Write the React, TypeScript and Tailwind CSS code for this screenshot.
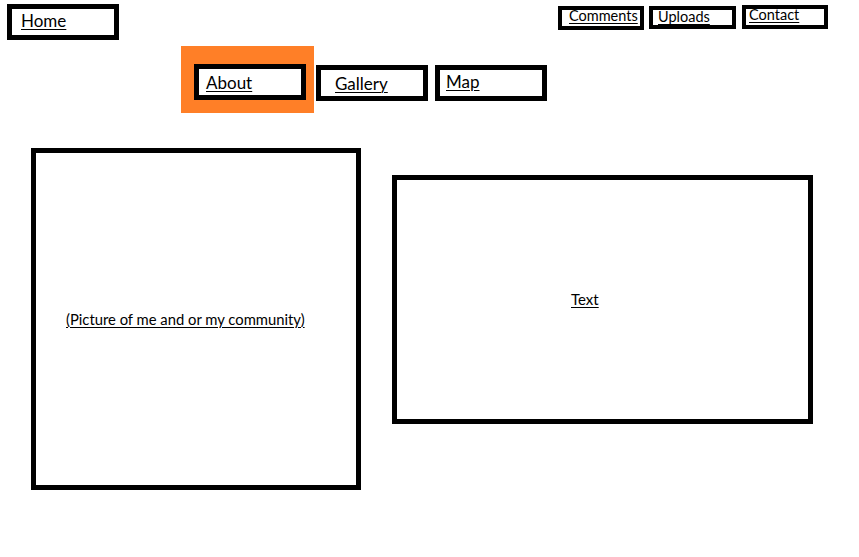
const font = { fontFamily: 'Lato, "Open Sans", sans-serif' };

type NavBoxProps = {
  label: string;
  className?: string;
};

function NavBox({ label, className }: NavBoxProps) {
  return (
    <div className={`flex items-center border-black bg-white ${className ?? ''}`.trim()}>
      <a href="#" className="text-black underline underline-offset-2 decoration-1 leading-none">
        {label}
      </a>
    </div>
  );
}

export default function App() {
  return (
    <div className="w-[859px] h-[557px] bg-white text-black overflow-hidden" style={font}>
      {/* top row */}
      <div className="flex items-start h-[46px]">
        <NavBox label="Home" className="ml-[7px] mt-[4px] w-[112px] h-[36px] border-[5px] pl-[9px] pb-[4px] text-[17px]" />
        <div className="ml-auto mr-[31px] mt-[5px] flex items-start text-[14.5px]">
          <NavBox label="Comments" className="mt-[1px] w-[86px] h-[24px] border-4 pl-[7px] pb-[4px]" />
          <NavBox label="Uploads" className="ml-[5px] mt-[1px] w-[87px] h-[23px] border-4 pl-[5px]" />
          <NavBox label="Contact" className="ml-[6px] w-[86px] h-[24px] border-4 pl-[3px] pb-[4px]" />
        </div>
      </div>

      {/* second row */}
      <div className="flex items-start pl-[181px] text-[17px]">
        <div className="w-[133px] h-[67px] bg-[#ff7f27] pt-[18px] pl-[13px]">
          <NavBox label="About" className="w-[112px] h-[36px] border-[5px] pl-[7px]" />
        </div>
        <NavBox label="Gallery" className="ml-[2px] mt-[19px] w-[112px] h-[36px] border-[5px] pl-[14px]" />
        <NavBox label="Map" className="ml-[7px] mt-[19px] w-[112px] h-[36px] border-[5px] pl-[6px] pb-[4px]" />
      </div>

      {/* content */}
      <div className="flex items-start mt-[35px] pl-[31px] text-[15px]">
        <div className="w-[330px] h-[342px] border-[5px] border-black flex items-center pl-[30px]">
          <a href="#" className="text-[14.8px] underline underline-offset-2 decoration-1 leading-none">
            (Picture of me and or my community)
          </a>
        </div>
        <div className="ml-[31px] mt-[27px] w-[421px] h-[249px] border-[5px] border-black flex items-center pl-[174px]">
          <a href="#" className="underline underline-offset-2 decoration-1 leading-none">
            Text
          </a>
        </div>
      </div>
    </div>
  );
}
